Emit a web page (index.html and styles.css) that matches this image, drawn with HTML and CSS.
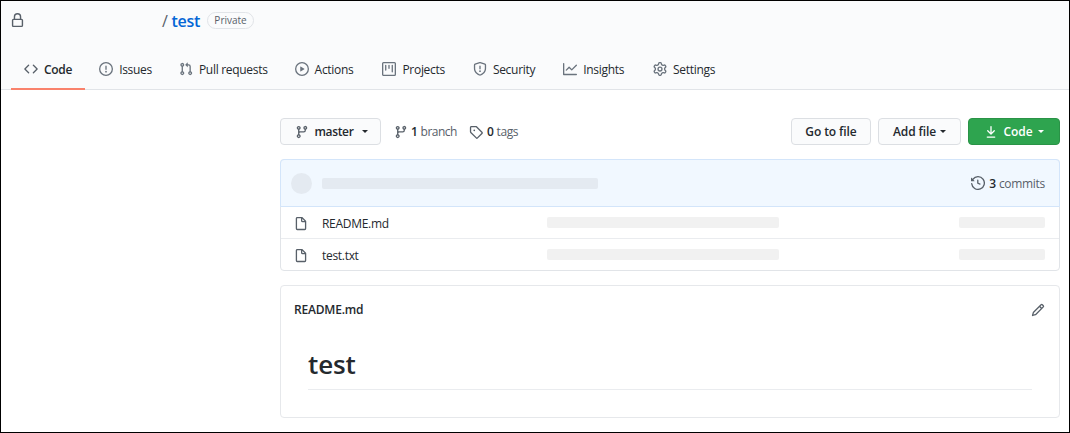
FILE: index.html
```html
<!DOCTYPE html>
<html lang="en">
<head>
<meta charset="utf-8">
<title>test</title>
<link rel="stylesheet" href="styles.css">
</head>
<body>
<div class="frame">
  <header class="repo-head">
    <div class="title-row">
      <svg class="icon lock" viewBox="0 0 16 16"><path fill-rule="evenodd" d="M4 4v2h-.25A1.75 1.75 0 002 7.75v5.5c0 .966.784 1.75 1.75 1.75h8.5A1.75 1.75 0 0014 13.25v-5.5A1.75 1.75 0 0012.25 6H12V4a4 4 0 10-8 0zm6.5 2V4a2.5 2.5 0 00-5 0v2h5zM12 7.5h.25a.25.25 0 01.25.25v5.5a.25.25 0 01-.25.25h-8.5a.25.25 0 01-.25-.25v-5.5a.25.25 0 01.25-.25H12z"/></svg>
      <span class="slash">/</span>
      <a class="repo-name">test</a>
      <span class="badge">Private</span>
    </div>
    <nav class="tabs">
      <a class="tab active"><svg class="icon dark" viewBox="0 0 16 16"><path fill-rule="evenodd" d="M4.72 3.22a.75.75 0 011.06 1.06L2.06 8l3.72 3.72a.75.75 0 11-1.06 1.06L.47 8.53a.75.75 0 010-1.06l4.25-4.25zm6.56 0a.75.75 0 10-1.06 1.06L13.94 8l-3.72 3.72a.75.75 0 101.06 1.06l4.25-4.25a.75.75 0 000-1.06l-4.25-4.25z"/></svg>Code</a>
      <a class="tab"><svg class="icon" viewBox="0 0 16 16"><path fill-rule="evenodd" d="M8 1.5a6.5 6.5 0 100 13 6.5 6.5 0 000-13zM0 8a8 8 0 1116 0A8 8 0 010 8zm9 3a1 1 0 11-2 0 1 1 0 012 0zm-.25-6.25a.75.75 0 00-1.5 0v3.5a.75.75 0 001.5 0v-3.5z"/></svg>Issues</a>
      <a class="tab"><svg class="icon" viewBox="0 0 16 16"><path fill-rule="evenodd" d="M7.177 3.073L9.573.677A.25.25 0 0110 .854v4.792a.25.25 0 01-.427.177L7.177 3.427a.25.25 0 010-.354zM3.75 2.5a.75.75 0 100 1.5.75.75 0 000-1.5zm-2.25.75a2.25 2.25 0 113 2.122v5.256a2.251 2.251 0 11-1.5 0V5.372A2.25 2.25 0 011.5 3.25zM11 2.5h-1V4h1a1 1 0 011 1v5.628a2.251 2.251 0 101.5 0V5A2.5 2.5 0 0011 2.5zm1 10.25a.75.75 0 111.5 0 .75.75 0 01-1.5 0zM3.75 12a.75.75 0 100 1.5.75.75 0 000-1.5z"/></svg>Pull requests</a>
      <a class="tab wide"><svg class="icon" viewBox="0 0 16 16"><path fill-rule="evenodd" d="M1.5 8a6.5 6.5 0 1113 0 6.5 6.5 0 01-13 0zM8 0a8 8 0 100 16A8 8 0 008 0zM6.379 5.227A.25.25 0 006 5.442v5.117a.25.25 0 00.379.214l4.264-2.559a.25.25 0 000-.428L6.379 5.227z"/></svg>Actions</a>
      <a class="tab tight"><svg class="icon" viewBox="0 0 16 16"><path fill-rule="evenodd" d="M1.75 0A1.75 1.75 0 000 1.75v12.5C0 15.216.784 16 1.75 16h12.5A1.75 1.75 0 0016 14.25V1.75A1.75 1.75 0 0014.25 0H1.75zM1.5 1.75a.25.25 0 01.25-.25h12.5a.25.25 0 01.25.25v12.5a.25.25 0 01-.25.25H1.75a.25.25 0 01-.25-.25V1.75zM11.75 3a.75.75 0 00-.75.75v7.5a.75.75 0 001.5 0v-7.5a.75.75 0 00-.75-.75zm-8.25.75a.75.75 0 011.5 0v5.5a.75.75 0 01-1.5 0v-5.5zM8 3a.75.75 0 00-.75.75v3.5a.75.75 0 001.5 0v-3.5A.75.75 0 008 3z"/></svg>Projects</a>
      <a class="tab tight"><svg class="icon" viewBox="0 0 16 16"><path fill-rule="evenodd" d="M7.467.133a1.75 1.75 0 011.066 0l5.25 1.68A1.75 1.75 0 0115 3.48V7c0 1.566-.32 3.182-1.303 4.682-.983 1.498-2.585 2.813-5.032 3.855a1.7 1.7 0 01-1.33 0c-2.447-1.042-4.049-2.357-5.032-3.855C1.32 10.182 1 8.566 1 7V3.48a1.75 1.75 0 011.217-1.667l5.25-1.68zm.61 1.429a.25.25 0 00-.153 0l-5.25 1.68a.25.25 0 00-.174.238V7c0 1.358.275 2.666 1.057 3.86.784 1.194 2.121 2.34 4.366 3.297a.2.2 0 00.154 0c2.245-.956 3.582-2.104 4.366-3.298C13.225 9.666 13.5 8.36 13.5 7V3.48a.25.25 0 00-.174-.237l-5.25-1.68zM9 10.5a1 1 0 11-2 0 1 1 0 012 0zm-.25-5.75a.75.75 0 10-1.5 0v3a.75.75 0 001.5 0v-3z"/></svg>Security</a>
      <a class="tab roomy"><svg class="icon" viewBox="0 0 16 16"><path fill-rule="evenodd" d="M1.5 1.75a.75.75 0 00-1.5 0v12.5c0 .414.336.75.75.75h14.5a.75.75 0 000-1.5H1.5V1.75zm14.28 2.53a.75.75 0 00-1.06-1.06L10 7.94 7.53 5.47a.75.75 0 00-1.06 0L3.22 8.72a.75.75 0 001.06 1.06L7 7.06l2.47 2.47a.75.75 0 001.06 0l5.25-5.25z"/></svg>Insights</a>
      <a class="tab"><svg class="icon" viewBox="0 0 16 16"><path fill-rule="evenodd" d="M7.429 1.525a6.593 6.593 0 011.142 0c.036.003.108.036.137.146l.289 1.105c.147.561.549.967.998 1.189.173.086.34.183.5.29.417.278.97.423 1.529.27l1.103-.303c.109-.03.175.016.195.045.22.312.412.644.573.99.014.031.021.11-.059.19l-.815.806c-.411.406-.562.957-.53 1.456a4.588 4.588 0 010 .582c-.032.499.119 1.05.53 1.456l.815.806c.08.08.073.159.059.19a6.494 6.494 0 01-.573.99c-.02.029-.086.074-.195.045l-1.103-.303c-.559-.153-1.112-.008-1.529.27-.16.107-.327.204-.5.29-.449.222-.851.628-.998 1.189l-.289 1.105c-.029.11-.101.143-.137.146a6.613 6.613 0 01-1.142 0c-.036-.003-.108-.037-.137-.146l-.289-1.105c-.147-.561-.549-.967-.998-1.189a4.502 4.502 0 01-.5-.29c-.417-.278-.97-.423-1.529-.27l-1.103.303c-.109.03-.175-.016-.195-.045a6.492 6.492 0 01-.573-.99c-.014-.031-.021-.11.059-.19l.815-.806c.411-.406.562-.957.53-1.456a4.587 4.587 0 010-.582c-.032-.499-.119-1.05-.53-1.456l-.815-.806c-.08-.08-.073-.159-.059-.19a6.44 6.44 0 01.573-.99c.02-.029.086-.075.195-.045l1.103.303c.559.153 1.112.008 1.529-.27.16-.107.327-.204.5-.29.449-.222.851-.628.998-1.189l.289-1.105c.029-.11.101-.143.137-.146zM8 0c-.236 0-.47.01-.701.03-.743.065-1.29.615-1.458 1.261l-.29 1.106c-.017.066-.078.158-.211.224a5.994 5.994 0 00-.668.386c-.123.082-.233.09-.3.071L3.27 2.776c-.644-.177-1.392.02-1.82.63a7.977 7.977 0 00-.704 1.217c-.315.675-.111 1.422.363 1.891l.815.806c.05.048.098.147.088.294a6.084 6.084 0 000 .772c.01.147-.038.246-.088.294l-.815.806c-.474.469-.678 1.216-.363 1.891.2.428.436.835.704 1.218.428.609 1.176.806 1.82.63l1.103-.303c.066-.019.176-.011.299.071.213.143.436.272.668.386.133.066.194.158.212.224l.289 1.106c.169.646.715 1.196 1.458 1.26a8.094 8.094 0 001.402 0c.743-.064 1.29-.614 1.458-1.26l.29-1.106c.017-.066.078-.158.211-.224a5.98 5.98 0 00.668-.386c.123-.082.233-.09.3-.071l1.102.302c.644.177 1.392-.02 1.82-.63.268-.382.505-.789.704-1.217.315-.675.111-1.422-.364-1.891l-.814-.806c-.05-.048-.098-.147-.088-.294a6.1 6.1 0 000-.772c-.01-.147.039-.246.088-.294l.814-.806c.475-.469.679-1.216.364-1.891a7.992 7.992 0 00-.704-1.218c-.428-.609-1.176-.806-1.82-.63l-1.103.303c-.066.019-.176.011-.299-.071a5.991 5.991 0 00-.668-.386c-.133-.066-.194-.158-.212-.224L10.16 1.29C9.99.645 9.444.095 8.701.031A8.094 8.094 0 008 0zm1.5 8a1.5 1.5 0 11-3 0 1.5 1.5 0 013 0zM11 8a3 3 0 11-6 0 3 3 0 016 0z"/></svg>Settings</a>
    </nav>
  </header>

  <main class="content">
    <div class="toolbar">
      <button class="btn branch-btn"><svg class="icon dark" viewBox="0 0 16 16"><path fill-rule="evenodd" d="M11.75 2.5a.75.75 0 100 1.5.75.75 0 000-1.5zm-2.25.75a2.25 2.25 0 113 2.122V6A2.5 2.5 0 0110 8.5H6a1 1 0 00-1 1v1.128a2.251 2.251 0 11-1.5 0V5.372a2.25 2.25 0 111.5 0v1.836A2.492 2.492 0 016 7h4a1 1 0 001-1v-.628A2.25 2.25 0 019.5 3.25zM4.25 12a.75.75 0 100 1.5.75.75 0 000-1.5zM3.5 3.25a.75.75 0 111.5 0 .75.75 0 01-1.5 0z"/></svg><span>master</span><i class="caret"></i></button>
      <a class="stat branches"><svg class="icon dark" viewBox="0 0 16 16"><path fill-rule="evenodd" d="M11.75 2.5a.75.75 0 100 1.5.75.75 0 000-1.5zm-2.25.75a2.25 2.25 0 113 2.122V6A2.5 2.5 0 0110 8.5H6a1 1 0 00-1 1v1.128a2.251 2.251 0 11-1.5 0V5.372a2.25 2.25 0 111.5 0v1.836A2.492 2.492 0 016 7h4a1 1 0 001-1v-.628A2.25 2.25 0 019.5 3.25zM4.25 12a.75.75 0 100 1.5.75.75 0 000-1.5zM3.5 3.25a.75.75 0 111.5 0 .75.75 0 01-1.5 0z"/></svg><b>1</b><span>branch</span></a>
      <a class="stat tags"><svg class="icon dark" viewBox="0 0 16 16"><path fill-rule="evenodd" d="M2.5 7.775V2.75a.25.25 0 01.25-.25h5.025a.25.25 0 01.177.073l6.25 6.25a.25.25 0 010 .354l-5.025 5.025a.25.25 0 01-.354 0l-6.25-6.25a.25.25 0 01-.073-.177zm-1.5 0V2.75C1 1.784 1.784 1 2.75 1h5.025c.464 0 .91.184 1.238.513l6.25 6.25a1.75 1.75 0 010 2.474l-5.026 5.026a1.75 1.75 0 01-2.474 0l-6.25-6.25A1.75 1.75 0 011 7.775zM6 5a1 1 0 100 2 1 1 0 000-2z"/></svg><b>0</b><span>tags</span></a>
      <div class="actions">
        <button class="btn go-btn">Go to file</button>
        <button class="btn add-btn">Add file<i class="caret"></i></button>
        <button class="btn code-btn"><svg class="icon white" viewBox="0 0 16 16"><path fill-rule="evenodd" d="M7.47 10.78a.75.75 0 001.06 0l3.75-3.75a.75.75 0 00-1.06-1.06L8.75 8.44V1.75a.75.75 0 00-1.5 0v6.69L4.78 5.97a.75.75 0 00-1.06 1.06l3.75 3.75zM3.75 13a.75.75 0 000 1.5h8.5a.75.75 0 000-1.5h-8.5z"/></svg><span>Code</span><i class="caret"></i></button>
      </div>
    </div>

    <section class="files">
      <div class="commit-row">
        <span class="avatar"></span>
        <span class="commit-bar"></span>
        <a class="commits"><svg class="icon dark" viewBox="0 0 16 16"><path fill-rule="evenodd" d="M1.643 3.143L.427 1.927A.25.25 0 000 2.104V5.75c0 .138.112.25.25.25h3.646a.25.25 0 00.177-.427L2.715 4.215a6.5 6.5 0 11-1.18 4.458.75.75 0 10-1.493.154 8.001 8.001 0 101.6-5.684zM7.75 4a.75.75 0 01.75.75v2.992l2.028.812a.75.75 0 01-.557 1.392l-2.5-1A.75.75 0 017 8.25v-3.5A.75.75 0 017.75 4z"/></svg><b>3</b><span>commits</span></a>
      </div>
      <div class="file-row">
        <svg class="icon file" viewBox="0 0 16 16"><path fill-rule="evenodd" d="M3.75 1.5a.25.25 0 00-.25.25v11.5c0 .138.112.25.25.25h8.5a.25.25 0 00.25-.25V6H9.75A1.75 1.75 0 018 4.25V1.5H3.75zm5.75.56v2.19c0 .138.112.25.25.25h2.19L9.5 2.06zM2 1.75C2 .784 2.784 0 3.75 0h5.086c.464 0 .909.184 1.237.513l3.414 3.414c.329.328.513.773.513 1.237v8.086A1.75 1.75 0 0112.25 15h-8.5A1.75 1.75 0 012 13.25V1.75z"/></svg>
        <span class="file-name">README.md</span>
        <span class="skeleton msg"></span>
        <span class="skeleton age"></span>
      </div>
      <div class="file-row">
        <svg class="icon file" viewBox="0 0 16 16"><path fill-rule="evenodd" d="M3.75 1.5a.25.25 0 00-.25.25v11.5c0 .138.112.25.25.25h8.5a.25.25 0 00.25-.25V6H9.75A1.75 1.75 0 018 4.25V1.5H3.75zm5.75.56v2.19c0 .138.112.25.25.25h2.19L9.5 2.06zM2 1.75C2 .784 2.784 0 3.75 0h5.086c.464 0 .909.184 1.237.513l3.414 3.414c.329.328.513.773.513 1.237v8.086A1.75 1.75 0 0112.25 15h-8.5A1.75 1.75 0 012 13.25V1.75z"/></svg>
        <span class="file-name">test.txt</span>
        <span class="skeleton msg"></span>
        <span class="skeleton age"></span>
      </div>
    </section>

    <section class="readme">
      <div class="readme-head">
        <span class="readme-title">README.md</span>
        <svg class="icon pencil" viewBox="0 0 16 16"><path fill-rule="evenodd" d="M11.013 1.427a1.75 1.75 0 012.474 0l1.086 1.086a1.75 1.75 0 010 2.474l-8.61 8.61c-.21.21-.47.364-.756.445l-3.251.93a.75.75 0 01-.927-.928l.929-3.25a1.75 1.75 0 01.445-.758l8.61-8.61zm1.414 1.06a.25.25 0 00-.354 0L10.811 3.75l1.439 1.44 1.263-1.263a.25.25 0 000-.354l-1.086-1.086zM11.189 6.25L9.75 4.81l-6.286 6.287a.25.25 0 00-.064.108l-.558 1.953 1.953-.558a.249.249 0 00.108-.064l6.286-6.286z"/></svg>
      </div>
      <h1 class="readme-h1">test</h1>
    </section>
  </main>
</div>
</body>
</html>
```

FILE: styles.css
```css
* { box-sizing: border-box; }
html, body { margin: 0; padding: 0; background: #fff; }
body {
  font-family: "Open Sans", "Noto Sans", "Liberation Sans", sans-serif;
  font-size: 12px;
  letter-spacing: -0.3px;
  color: #24292e;
}
.frame {
  width: 1070px;
  height: 433px;
  border: 1px solid #000;
  overflow: hidden;
}
.icon { width: 14px; height: 14px; fill: #6a737d; flex: none; display: block; }
.icon.dark { fill: #586069; }
.icon.white { fill: #fff; }

.repo-head {
  height: 89px;
  background: #fafbfc;
  border-bottom: 1px solid #e1e4e8;
  display: flex;
  flex-direction: column;
}
.title-row {
  height: 40px;
  padding: 11px 0 0 9px;
  display: flex;
  align-items: flex-start;
}
.lock { width: 15px; height: 15px; margin-top: 1px; fill: #586069; }
.slash { margin: -2px 0 0 137px; font-size: 16px; line-height: 22px; color: #586069; }
.repo-name { margin: -2px 0 0 4px; font-size: 16px; line-height: 22px; font-weight: 600; color: #0366d6; }
.badge {
  margin: 0 0 0 7px;
  width: 47px;
  height: 17px;
  border: 1px solid #e1e4e8;
  border-radius: 9px;
  font-size: 10px;
  line-height: 15px;
  letter-spacing: 0;
  text-align: center;
  font-weight: 500;
  color: #586069;
}
.tabs { display: flex; padding-left: 10px; margin-top: auto; }
.tab {
  height: 48px;
  padding: 8px 13px 0;
  margin-right: 1px;
  display: flex;
  align-items: center;
  gap: 6px;
  border-bottom: 2px solid transparent;
  color: #24292e;
  margin-bottom: -1px;
}
.tab.wide { margin-right: 3px; }
.tab.tight { margin-right: 2px; }
.tab.roomy { margin-right: 3px; }
.tab.active { font-weight: 600; border-bottom-color: #f9826c; }

.content { padding: 28px 9px 0 279px; }
.toolbar { display: flex; align-items: center; height: 27px; }
.btn {
  font: inherit;
  letter-spacing: -0.1px;
  font-weight: 600;
  height: 27px;
  padding: 0;
  background: #fafbfc;
  border: 1px solid #dcdfe3;
  border-radius: 4px;
  color: #24292e;
  display: flex;
  align-items: center;
  justify-content: center;
}
.caret {
  display: inline-block;
  width: 0; height: 0;
  border-style: solid;
  border-width: 3px 3px 0 3px;
  border-color: currentColor transparent transparent transparent;
}
.branch-btn { width: 101px; gap: 6px; padding-left: 1px; letter-spacing: -0.35px; }
.branch-btn span { margin-right: 2px; }
.stat { display: flex; align-items: center; color: #586069; gap: 3px; }
.stat b { font-weight: 600; color: #24292e; }
.branches { margin-left: 13px; }
.branches span { letter-spacing: -0.5px; }
.tags { margin-left: 12px; gap: 3px; }
.tags b { margin-left: 1px; }
.tags span { letter-spacing: -0.4px; }
.actions { margin-left: auto; display: flex; gap: 7px; }
.go-btn { width: 80px; }
.add-btn { width: 83px; gap: 4px; }
.code-btn {
  width: 92px;
  background: #2ea44f;
  border-color: #2a9347;
  color: #fff;
  gap: 6px;
}

.files {
  margin-top: 14px;
  border: 1px solid #e1e4e8;
  border-radius: 4px;
}
.commit-row {
  height: 48px;
  margin: -1px -1px 0;
  background: #f1f8ff;
  border: 1px solid #d3e5fa;
  border-radius: 4px 4px 0 0;
  display: flex;
  align-items: center;
  padding: 0 14px 0 10px;
}
.avatar { width: 21px; height: 21px; border-radius: 50%; background: #e4eaf1; }
.commit-bar { width: 276px; height: 11px; margin-left: 10px; border-radius: 2px; background: #e4eaf1; }
.commits { margin-left: auto; display: flex; align-items: center; gap: 3px; color: #586069; }
.commits b { font-weight: 600; color: #24292e; margin-left: 1px; }
.file-row {
  height: 32px;
  display: flex;
  align-items: center;
  padding: 0 14px;
  border-top: 1px solid #eaecef;
}
.commit-row + .file-row { border-top: 0; height: 31px; }
.file { width: 14px; height: 14px; margin: 2px 0 0 -1px; fill: #586069; }
.file-name { width: 225px; margin-left: 14px; padding-top: 2px; color: #24292e; }
.skeleton { height: 11px; border-radius: 2px; background: #f1f1f1; }
.msg { width: 232px; }
.age { width: 86px; margin-left: auto; }

.readme {
  margin-top: 14px;
  height: 133px;
  border: 1px solid #e6e8eb;
  border-radius: 4px;
  padding: 0 13px;
}
.readme-head {
  height: 47px;
  display: flex;
  align-items: center;
  justify-content: space-between;
}
.readme-title { font-weight: 600; letter-spacing: -0.2px; }
.pencil { fill: #586069; margin-right: 1px; }
.readme-h1 {
  margin: 11px 14px 0;
  height: 46px;
  font-size: 26px;
  line-height: 40px;
  font-weight: 600;
  letter-spacing: -0.1px;
  color: #24292e;
  border-bottom: 1px solid #eaecef;
}
```
